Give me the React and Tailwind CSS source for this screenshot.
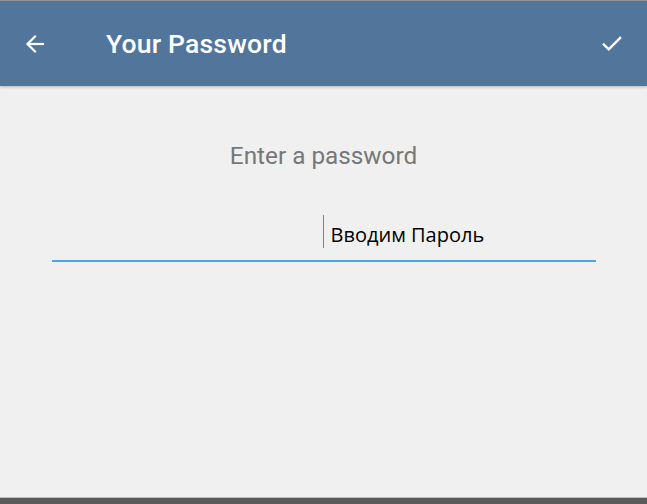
import React from 'react';

const App = () => {
  return (
    <div className="flex flex-col h-[504px] w-[647px] bg-[#f0f0f0] overflow-hidden" style={{ fontFamily: 'Roboto, sans-serif' }}>
      <div className="h-px bg-[#9a9a9a]"></div>
      <div className="relative z-10 flex items-center h-[85px] bg-[#52759c] text-white shadow-[0_1px_3px_rgba(0,0,0,0.25)]">
        <div className="w-[106px] pl-[23px]">
          <svg width="24" height="24" viewBox="0 0 24 24" fill="none" stroke="white" strokeWidth="2.2" strokeLinecap="square">
            <path d="M20 12H5" />
            <path d="M12 4.5L4.5 12L12 19.5" />
          </svg>
        </div>
        <h1 className="flex-1 text-[26.5px] font-medium tracking-[0.2px] leading-[36px]">Your Password</h1>
        <div className="pr-[22px]">
          <svg width="26" height="26" viewBox="0 0 24 24" fill="none" stroke="white" strokeWidth="2.2" strokeLinecap="square">
            <path d="M4.5 12.5L9 17L19.5 6.5" />
          </svg>
        </div>
      </div>

      <div className="flex-1 flex flex-col items-center pt-[52px]">
        <p className="text-[24.3px] leading-[36px] text-[#777777]">Enter a password</p>
        <div className="mt-[40px] w-[544px] h-[48px] flex items-start border-b-2 border-[#4ba6e8]">
          <div className="w-[271px]"></div>
          <div className="mt-px w-px h-[33px] bg-[#808080]"></div>
          <span className="mt-[6px] ml-[7px] text-[20px] leading-[30px] text-black" style={{ fontFamily: '"Open Sans", sans-serif' }}>Вводим Пароль</span>
        </div>
      </div>

      <div className="h-px bg-[#bcbcbc]"></div>
      <div className="h-[6px] bg-[#5a5a5a]"></div>
    </div>
  );
};

export default App;
